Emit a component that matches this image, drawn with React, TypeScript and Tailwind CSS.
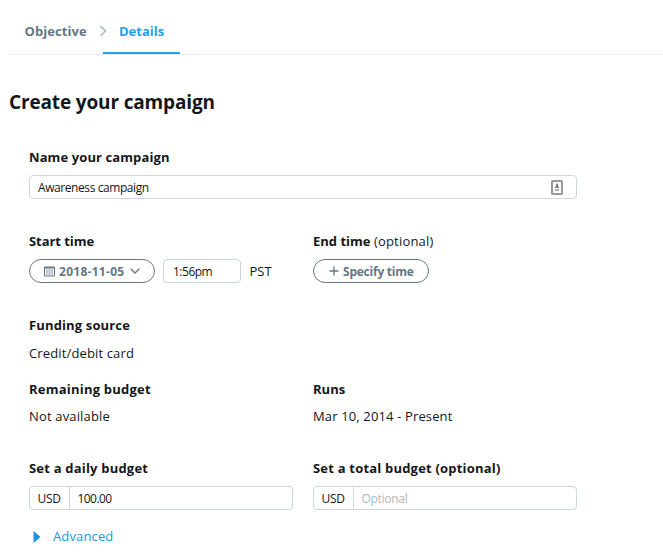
import React from "react";

function CalendarIcon() {
  return (
    <svg width="11" height="11" viewBox="0 0 11 11" className="shrink-0" fill="#657786">
      <path fillRule="evenodd" d="M1 0.500h9a1 1 0 0 1 1 1v8a1 1 0 0 1-1 1H1a1 1 0 0 1-1-1v-8a1 1 0 0 1 1-1zM1 2.500v7h9v-7z" />
      <path d="M2 3.500h1.600v1H2zM4.500 3.500h2v1h-2zM7.400 3.500H9v1H7.400zM2 5.500h1.600v1H2zM4.500 5.500h2v1h-2zM7.400 5.500H9v1H7.400zM2 7.500h1.600v1H2zM4.500 7.500h2v1h-2zM7.400 7.500H9v1H7.400z" />
    </svg>
  );
}

function ContactIcon() {
  return (
    <svg width="12" height="15" viewBox="0 0 12 15" className="shrink-0">
      <rect x="1" y="1" width="10" height="13" rx="0.5" fill="#fff" stroke="#999" strokeWidth="2" />
      <path d="M6 3l1.100 1.600-.3 1.400L8 7v1H4V7l1.200-1-.3-1.400z" fill="#777" />
      <path d="M4 9h4v2H4z" fill="#b0b0b0" />
    </svg>
  );
}

function Label({ children, className = "" }: { children: React.ReactNode; className?: string }) {
  return <div className={`h-5 text-[13px] font-bold leading-5 ${className}`}>{children}</div>;
}

function MoneyField({ children }: { children: React.ReactNode }) {
  return (
    <div className="mt-2 flex h-6 w-[264px] rounded-[4px] border border-[#ccd6dd] text-[12px] leading-[23px]">
      <div className="w-10 border-r border-[#ccd6dd] pl-[7.500px] tracking-[-0.250px]">USD</div>
      <div className="pl-[7.500px]">{children}</div>
    </div>
  );
}

export default function App() {
  return (
    <div className="h-[556px] w-[663px] overflow-hidden bg-white pl-[9px] font-['Open_Sans','Noto_Sans',sans-serif] text-[#14171a] whitespace-nowrap">
      <nav className="flex h-[55px] border-b border-[#e6ecf0] text-[13px] font-bold leading-5">
        <div className="w-[94px] pt-[21px] pl-[15.500px] text-[#657786]">
          <div className="flex items-center">
            <span className="w-[74px] shrink-0 tracking-[0.060px]">Objective</span>
            <svg width="8" height="12" viewBox="0 0 8 12" className="shrink-0" fill="none" stroke="#aab8c2" strokeWidth="1.500">
              <path d="M1.500 1L6.500 6l-5 5" />
            </svg>
          </div>
        </div>
        <div className="h-[54px] w-[77px] border-b-2 border-[#1da1f2] pt-[21px] pl-4 text-[#1da1f2]">Details</div>
      </nav>

      <h1 className="mt-[33px] h-7 text-[19px] font-bold leading-7 tracking-[-0.15px]">Create your campaign</h1>

      <main className="w-[568px] pl-5">
        <Label className="mt-[31px] tracking-[0.1px]">Name your campaign</Label>
        <div className="mt-2 flex h-6 items-center justify-between rounded-[4px] border border-[#ccd6dd] pr-[13px] pl-2 text-[12px] tracking-[-0.420px]">
          <span className="pt-0.5">Awareness campaign</span>
          <ContactIcon />
        </div>

        <div className="mt-8 grid grid-cols-[264px_264px] gap-x-5">
          <section>
            <Label className="tracking-[-0.050px]">Start time</Label>
            <div className="mt-2 flex h-6 items-center">
              <div className="flex h-6 w-[126px] items-center rounded-full border border-[#657786] pl-[14px] text-[12px] font-bold text-[#657786]">
                <CalendarIcon />
                <span className="ml-1 w-[71px] pt-0.5 tracking-[0.280px]">2018-11-05</span>
                <svg width="10" height="6" viewBox="0 0 10 6" fill="none" stroke="#657786" strokeWidth="1.300">
                  <path d="M0.700 0.700L5 5l4.300-4.300" />
                </svg>
              </div>
              <div className="ml-2 h-6 w-[78px] rounded-[4px] border border-[#ccd6dd] pl-[9px] text-[12px] leading-[24px] tracking-[-0.500px]">1:56pm</div>
              <span className="ml-[8.500px] pt-0.5 text-[13px]">PST</span>
            </div>
          </section>
          <section>
            <Label>End time <span className="font-normal tracking-[0.200px]">(optional)</span></Label>
            <div className="mt-2 flex h-6 w-[116px] items-center rounded-full border border-[#657786] pl-[15px] text-[12px] font-bold text-[#657786]">
              <svg width="10" height="10" viewBox="0 0 10 10" stroke="#657786" strokeWidth="1.300">
                <path d="M5 .5v9M.5 5h9" />
              </svg>
              <span className="ml-1 pt-0.5 tracking-[-0.230px]">Specify time</span>
            </div>
          </section>
        </div>

        <Label className="mt-8 tracking-[0.140px]">Funding source</Label>
        <div className="mt-2 text-[13px] leading-5 tracking-[0.140px]">Credit/debit card</div>

        <div className="mt-4 grid grid-cols-[264px_264px] gap-x-5">
          <section>
            <Label className="tracking-[0.220px]">Remaining budget</Label>
            <div className="mt-[7px] text-[13px] leading-5 tracking-[0.160px]">Not available</div>
          </section>
          <section>
            <Label>Runs</Label>
            <div className="mt-[7px] text-[13px] leading-5 tracking-[0.140px]">Mar 10, 2014 - Present</div>
          </section>
        </div>

        <div className="mt-8 grid grid-cols-[264px_264px] gap-x-5">
          <section>
            <Label className="tracking-[0.200px]">Set a daily budget</Label>
            <MoneyField><span className="tracking-[-0.550px]">100.00</span></MoneyField>
          </section>
          <section>
            <Label className="tracking-[0.200px]">Set a total budget (optional)</Label>
            <MoneyField><span className="tracking-[-0.300px] text-[#aab8c2]">Optional</span></MoneyField>
          </section>
        </div>

        <div className="mt-[17px] flex h-5 items-center pl-1 text-[13px] tracking-[0.140px] text-[#1b95e0]">
          <svg width="8" height="12" viewBox="0 0 8 12" fill="#1b95e0"><path d="M0.500 0L7.500 6l-7 6z" /></svg>
          <span className="ml-3">Advanced</span>
        </div>
      </main>
    </div>
  );
}
